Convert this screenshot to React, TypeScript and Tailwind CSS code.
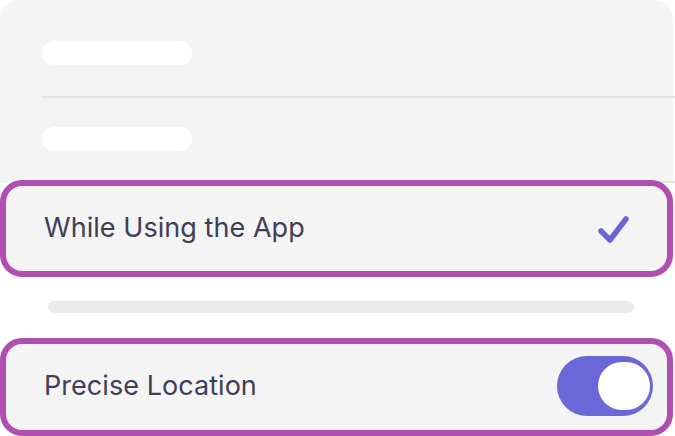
import React from "react";

export default function App() {
  return (
    <div className="w-[675px] h-[436px] bg-white overflow-hidden" style={{ fontFamily: "Inter, 'Noto Sans', sans-serif" }}>
      <div className="w-[673px] rounded-t-[20px] bg-[#f4f4f4] pt-[41px]">
        <div className="ml-[42px] w-[150px] h-[24px] rounded-full bg-white" />
        <div className="ml-[41px] mt-[31px] w-[634px] h-[2px] bg-[#e3e3e3]" />
        <div className="ml-[42px] mt-[29px] w-[150px] h-[24px] rounded-full bg-white" />
        <div className="ml-[41px] mt-[30px] w-[634px] h-[2px] bg-[#e3e3e3]" />
      </div>
      <div className="relative -mt-[3px] w-[673px] h-[97px] rounded-[22px] border-[6px] border-[#b14fb0] bg-[#f4f4f4] flex items-center justify-between pl-[38px] pr-[35px]">
        <span className="text-[27px] leading-none tracking-[0.05px] text-[#403e58] pb-[2px]">While Using the App</span>
        <svg width="36" height="32" viewBox="0 0 36 32" className="mt-[2px]">
          <path d="M5 17 L14 26 L30 5" fill="none" stroke="#6c63d9" strokeWidth="5.5" strokeLinecap="round" strokeLinejoin="round" />
        </svg>
      </div>
      <div className="ml-[48px] mt-[24px] w-[586px] h-[12px] rounded-full bg-[#ebebeb]" />
      <div className="mt-[25px] w-[673px] h-[98px] rounded-[22px] border-[6px] border-[#b14fb0] bg-[#f4f4f4] flex items-center justify-between pl-[38px] pr-[14px]">
        <span className="text-[27px] leading-none tracking-[0.05px] text-[#403e58] pb-[4px]">Precise Location</span>
        <div className="w-[96px] h-[60px] rounded-full bg-[#6c67d9] flex items-center justify-end pr-[3px] -mt-[2px]">
          <div className="w-[52px] h-[48px] rounded-full bg-white" />
        </div>
      </div>
    </div>
  );
}
